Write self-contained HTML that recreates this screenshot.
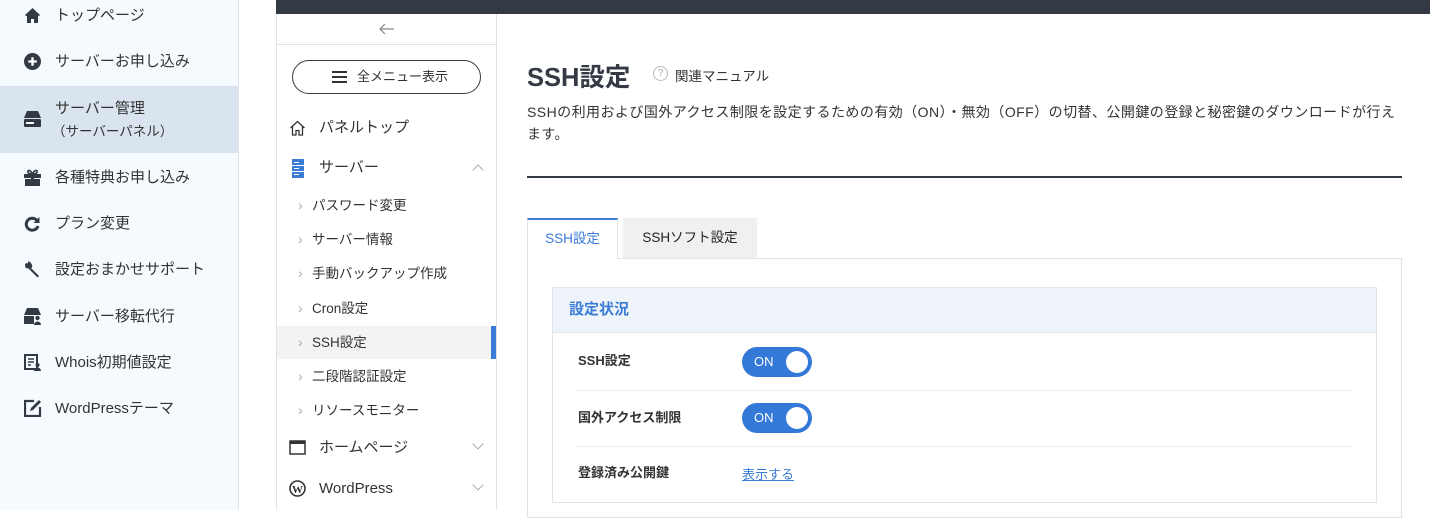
<!DOCTYPE html>
<html><head><meta charset="utf-8"><style>
*{margin:0;padding:0;box-sizing:border-box}
body{width:1430px;height:510px;overflow:hidden;position:relative;background:#fff;font-family:"Liberation Sans","Noto Sans CJK JP",sans-serif;color:#333}
.a{position:absolute;white-space:nowrap}
#side{position:absolute;left:0;top:0;width:239px;height:510px;background:#f5faff;border-right:1px solid #dde3ea}
.si{position:absolute;left:55px;font-size:15px;color:#333;line-height:20px}
.ic{position:absolute;left:24px}
#nav{position:absolute;left:276px;top:14px;width:221px;height:496px;border-left:1px solid #e3e3e3;border-right:1px solid #e3e3e3;background:#fff}
.ni{position:absolute;left:35px;font-size:13.5px;color:#333;line-height:18px}
.ch{position:absolute;left:21px;font-size:14px;color:#aaa;line-height:18px}
.tg{position:absolute;left:742px;width:70px;height:30px;border-radius:15px;background:#3478d8;color:#fff;font-size:13px;line-height:30px;padding-left:12px}
.tg:after{content:"";position:absolute;right:4px;top:4px;width:22px;height:22px;border-radius:50%;background:#fff}
.lb{position:absolute;left:578px;font-size:13px;font-weight:bold;color:#333;line-height:18px}
</style></head><body>
<div id="side">
<svg class="ic" style="top:7px" width="17" height="17" viewBox="0 0 17 17"><path d="M8.5 1L1 8l1.3 1.3L3 8.7V16h4v-4h3v4h4V8.7l.7.6L16 8z" fill="#333a44"/></svg>
<div class="si" style="top:6px">トップページ</div>
<svg class="ic" style="top:53px" width="17" height="17" viewBox="0 0 16 16"><circle cx="8" cy="8" r="8" fill="#333a44"/><path d="M8 4v8M4 8h8" stroke="#fff" stroke-width="2.2"/></svg>
<div class="si" style="top:52px">サーバーお申し込み</div>
<div style="position:absolute;left:0;top:86px;width:238px;height:67px;background:#d9e4ef"></div>
<svg class="ic" style="top:111px" width="17" height="16" viewBox="0 0 17 16"><path d="M3 0h11l3 7H0z" fill="#333a44"/><rect x="0" y="8" width="17" height="8" rx="1" fill="#333a44"/><rect x="2" y="11" width="8" height="2" fill="#fff"/></svg>
<div class="si" style="top:99px">サーバー管理</div>
<div class="si" style="top:122px;font-size:13.5px;left:52px">（サーバーパネル）</div>
<svg class="ic" style="top:169px" width="17" height="17" viewBox="0 0 17 17"><path d="M0 5h17v4H0zM1 10h6v7H1zM10 10h6v7h-6zM7 5h3v12H7z" fill="#333a44"/><path d="M8.5 5C6 0 3 1 4 3.5 5 5 8.5 5 8.5 5 8.5 5 12 5 13 3.5 14 1 11 0 8.5 5z" fill="none" stroke="#333a44" stroke-width="1.6"/></svg>
<div class="si" style="top:168px">各種特典お申し込み</div>
<svg class="ic" style="top:216px" width="16" height="16" viewBox="0 0 16 16"><path d="M13 4.5A6 6 0 1 0 14 10" fill="none" stroke="#333a44" stroke-width="3"/><path d="M15.5 1v6h-6z" fill="#333a44"/></svg>
<div class="si" style="top:214px">プラン変更</div>
<svg class="ic" style="top:261px" width="17" height="17" viewBox="0 0 17 17"><path d="M2 2l3.5 1L6 6l9 9-1.5 1.5-9-9-3-.5L1 3.5z" fill="#333a44"/><path d="M4 1.5a4 4 0 0 1 2.5 5" stroke="#333a44" stroke-width="3" fill="none"/></svg>
<div class="si" style="top:260px">設定おまかせサポート</div>
<svg class="ic" style="top:308px" width="17" height="17" viewBox="0 0 17 17"><path d="M3 0h11l3 7H0z" fill="#333a44"/><rect x="0" y="8" width="10" height="8" fill="#333a44"/><circle cx="13.5" cy="10" r="2.2" fill="#333a44"/><path d="M10 17a3.5 3.5 0 0 1 7 0z" fill="#333a44"/></svg>
<div class="si" style="top:307px">サーバー移転代行</div>
<svg class="ic" style="top:354px" width="17" height="17" viewBox="0 0 17 17"><rect x="1" y="1" width="12" height="14" fill="none" stroke="#333a44" stroke-width="2"/><path d="M4 5h6M4 8h6M4 11h3" stroke="#333a44" stroke-width="1.5"/><circle cx="13.5" cy="11" r="2" fill="#333a44"/><path d="M10 17a3.5 3.5 0 0 1 7 0z" fill="#333a44"/></svg>
<div class="si" style="top:353px">Whois初期値設定</div>
<svg class="ic" style="top:399px" width="18" height="18" viewBox="0 0 18 18"><path d="M10 2H1v15h15V8" fill="none" stroke="#333a44" stroke-width="2.2"/><path d="M6 12l1-3 8-8 2 2-8 8z" fill="#333a44"/></svg>
<div class="si" style="top:399px">WordPressテーマ</div>
</div>
<div style="position:absolute;left:276px;top:0;width:1154px;height:14px;background:#343a44"></div>
<div id="nav">
<div class="a" style="left:0;top:0;width:219px;height:31px;border-bottom:1px solid #e3e3e3"></div>
<svg class="a" style="left:102px;top:9px" width="16" height="12" viewBox="0 0 16 12"><path d="M15 6H1M6 1L1 6l5 5" fill="none" stroke="#888" stroke-width="1.2"/></svg>
<div class="a" style="left:15px;top:46px;width:189px;height:34px;border:1.5px solid #333a44;border-radius:17px;font-size:13px;line-height:31px;padding-left:64px;color:#333">全メニュー表示</div>
<div class="a" style="left:55px;top:57px;width:15px;height:12px;border-top:2px solid #333;border-bottom:2px solid #333"><div style="margin-top:3px;height:2px;background:#333"></div></div>
<svg class="a" style="left:12px;top:106px" width="17" height="16" viewBox="0 0 17 16"><path d="M1.5 8L8.5 1.5 15.5 8M3.5 6.5V15h3.5v-4.5h3V15h3.5V6.5" fill="none" stroke="#333" stroke-width="1.3"/></svg>
<div class="ni" style="top:105px;left:42px;font-size:15px">パネルトップ</div>
<svg class="a" style="left:15px;top:145px" width="12" height="19" viewBox="0 0 12 19"><rect width="12" height="19" fill="#3a7bd5"/><path d="M0 6.5h12M0 12.5h12M2 3.5h5M2 9.5h5M2 15.5h5" stroke="#fff" stroke-width="1"/></svg>
<div class="ni" style="top:145px;left:42px;font-size:15px">サーバー</div>
<div class="a" style="left:197px;top:152px;width:8px;height:8px;border-left:1px solid #aaa;border-top:1px solid #aaa;transform:rotate(45deg)"></div>
<div class="ch" style="top:182px">›</div><div class="ni" style="top:183px">パスワード変更</div>
<div class="ch" style="top:216px">›</div><div class="ni" style="top:217px">サーバー情報</div>
<div class="ch" style="top:250px">›</div><div class="ni" style="top:251px">手動バックアップ作成</div>
<div class="ch" style="top:285px">›</div><div class="ni" style="top:286px">Cron設定</div>
<div class="a" style="left:0;top:312px;width:219px;height:33px;background:#f3f3f3"></div>
<div class="a" style="left:214px;top:312px;width:5px;height:33px;background:#3a7bd5"></div>
<div class="ch" style="top:319px">›</div><div class="ni" style="top:320px">SSH設定</div>
<div class="ch" style="top:353px">›</div><div class="ni" style="top:354px">二段階認証設定</div>
<div class="ch" style="top:387px">›</div><div class="ni" style="top:388px">リソースモニター</div>
<svg class="a" style="left:12px;top:426px" width="17" height="15" viewBox="0 0 17 15"><rect x="1" y="1" width="15" height="13" fill="none" stroke="#333" stroke-width="1.5"/><rect x="1" y="1" width="15" height="3" fill="#333"/></svg>
<div class="ni" style="top:425px;left:42px;font-size:15px">ホームページ</div>
<div class="a" style="left:197px;top:426px;width:8px;height:8px;border-right:1px solid #aaa;border-bottom:1px solid #aaa;transform:rotate(45deg)"></div>
<svg class="a" style="left:12px;top:466px" width="17" height="17" viewBox="0 0 17 17"><circle cx="8.5" cy="8.5" r="7.5" fill="none" stroke="#333" stroke-width="1.6"/><text x="8.5" y="13" font-size="11" font-family="Liberation Serif" font-weight="bold" text-anchor="middle" fill="#333">W</text></svg>
<div class="ni" style="top:466px;left:42px;font-size:15px">WordPress</div>
<div class="a" style="left:197px;top:467px;width:8px;height:8px;border-right:1px solid #aaa;border-bottom:1px solid #aaa;transform:rotate(45deg)"></div>
</div>
<div class="a" style="left:527px;top:57px;font-size:25.5px;font-weight:bold;color:#333a44">SSH設定</div>
<div class="a" style="left:653px;top:66px;width:15px;height:15px;border:1.3px solid #bbb;border-radius:50%;font-size:10px;color:#aaa;text-align:center;line-height:13px">?</div>
<div class="a" style="left:675px;top:65px;font-size:13.5px;color:#333">関連マニュアル</div>
<div class="a" style="left:527px;top:101px;font-size:14px;letter-spacing:0.45px;line-height:22px;color:#333">SSHの利用および国外アクセス制限を設定するための有効（ON）・無効（OFF）の切替、公開鍵の登録と秘密鍵のダウンロードが行え<br>ます。</div>
<div class="a" style="left:527px;top:176px;width:875px;height:2px;background:#333a44"></div>
<div class="a" style="left:527px;top:258px;width:875px;height:260px;border:1px solid #e3e3e3"></div>
<div class="a" style="left:527px;top:218px;width:91px;height:41px;background:#fff;border:1px solid #e3e3e3;border-top:2px solid #3a7bd5;border-bottom:none;font-size:13.5px;color:#3a7bd5;text-align:center;line-height:38px">SSH設定</div>
<div class="a" style="left:623px;top:218px;width:134px;height:40px;background:#f0f0f0;font-size:13.5px;color:#222;text-align:center;line-height:40px">SSHソフト設定</div>
<div class="a" style="left:552px;top:287px;width:825px;height:216px;border:1px solid #e3e3e3"></div>
<div class="a" style="left:553px;top:288px;width:823px;height:45px;background:#eff4fb;border-bottom:1px solid #e3e3e3;font-size:15px;font-weight:bold;color:#3a7bd5;line-height:44px;padding-left:16px">設定状況</div>
<div class="lb" style="top:352px">SSH設定</div>
<div class="tg" style="top:347px">ON</div>
<div class="a" style="left:577px;top:390px;width:775px;height:1px;background:#ececec"></div>
<div class="lb" style="top:409px">国外アクセス制限</div>
<div class="tg" style="top:403px">ON</div>
<div class="a" style="left:577px;top:446px;width:775px;height:1px;background:#ececec"></div>
<div class="lb" style="top:464px">登録済み公開鍵</div>
<div class="a" style="left:742px;top:464px;font-size:13px;color:#3a7bd5;text-decoration:underline">表示する</div>
</body></html>
